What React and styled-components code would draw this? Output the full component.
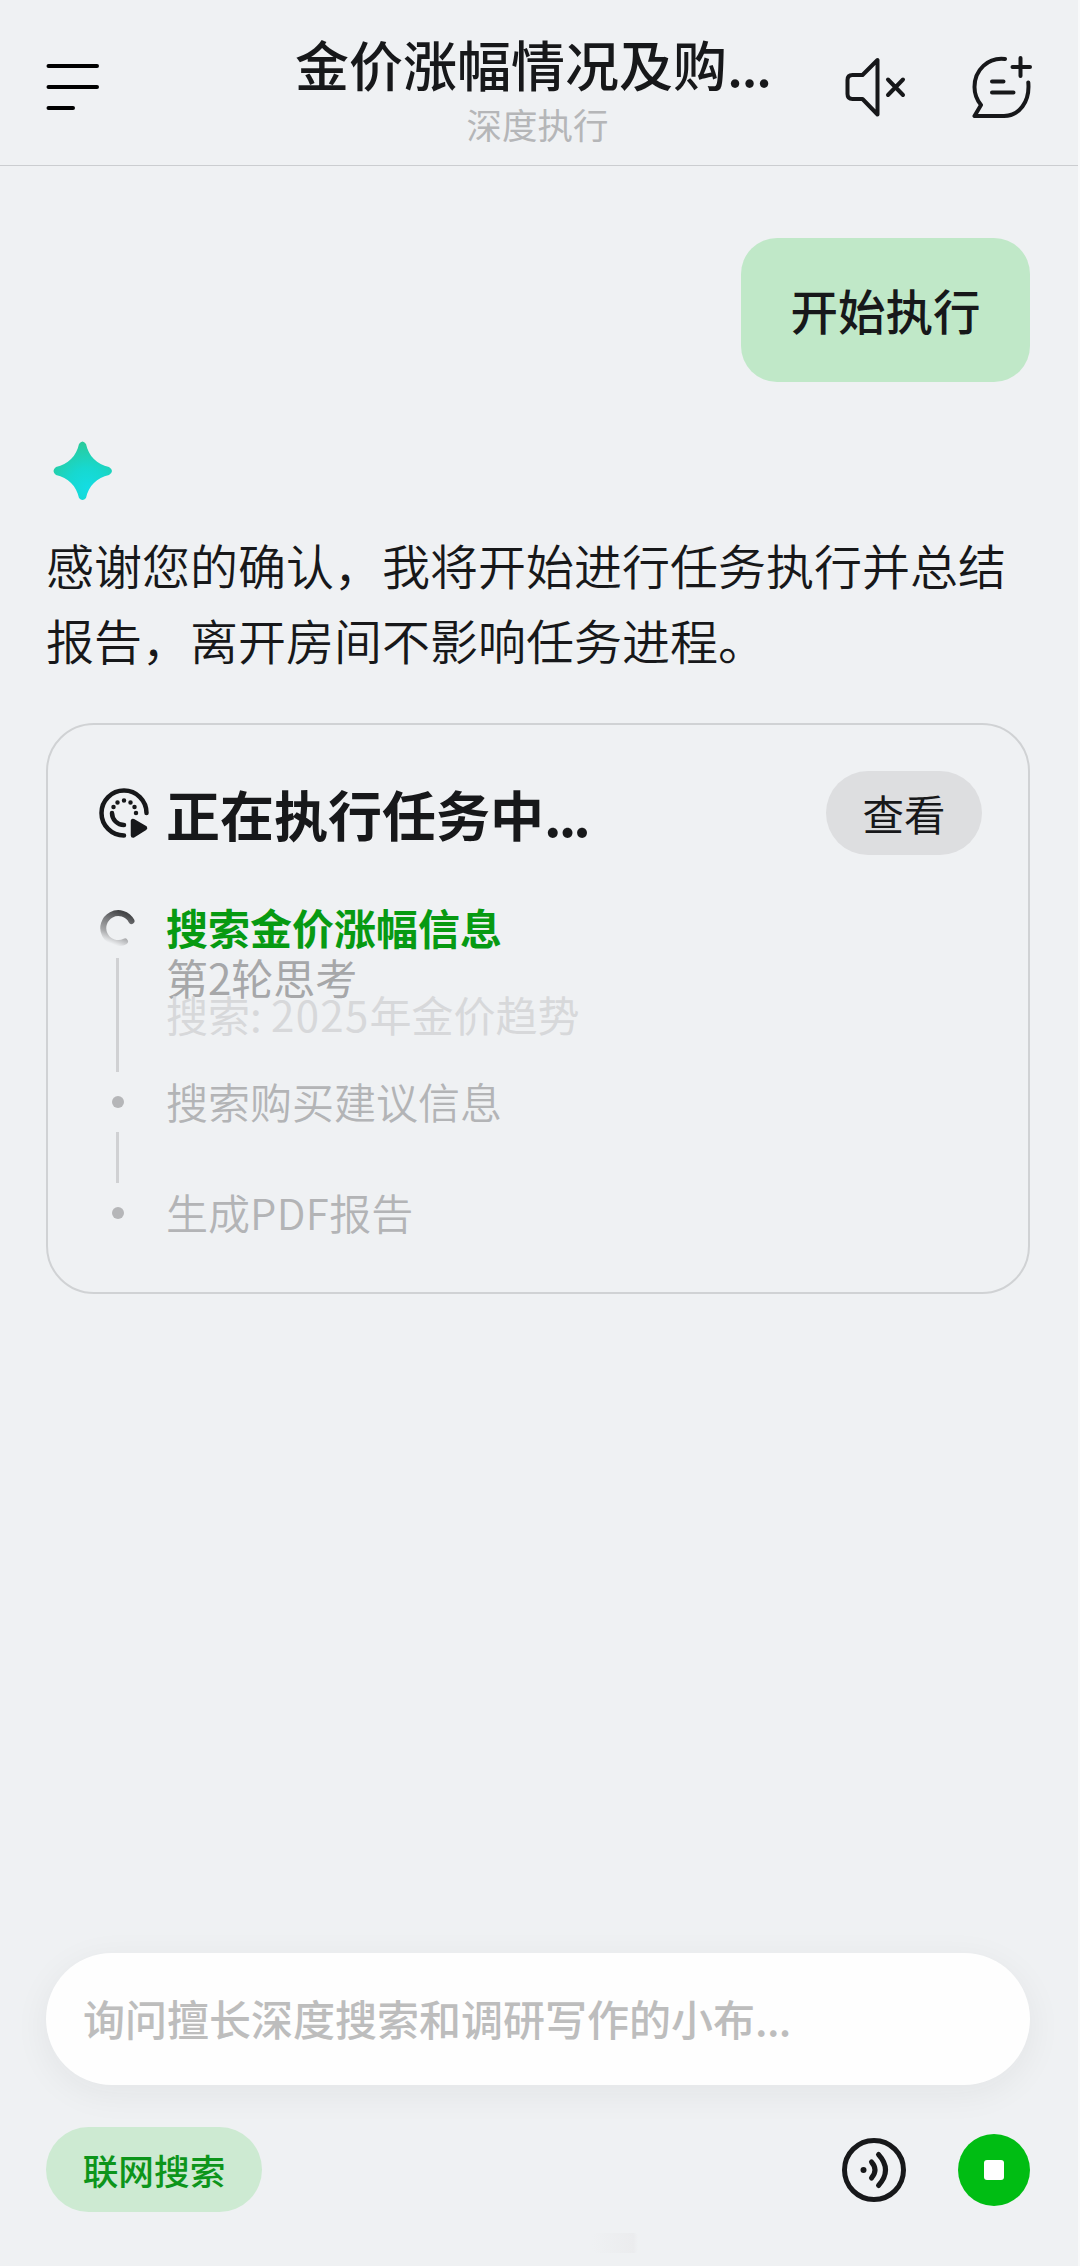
import styled, { createGlobalStyle, css } from 'styled-components';

const GlobalStyle = createGlobalStyle`
  * {
    box-sizing: border-box;
  }
  body {
    margin: 0;
    background: #eff1f3;
    color: #17181a;
    font-family: 'Noto Sans CJK SC', 'Noto Sans', sans-serif;
  }
  button {
    border: 0;
    padding: 0;
    background: none;
    color: inherit;
    font: inherit;
  }
  svg {
    display: block;
  }
`;

const Screen = styled.div`
  display: flex;
  flex-direction: column;
  width: 1080px;
  height: 2266px;
  border-right: 2px solid #f8f9fa;
  overflow: hidden;
`;

/* run of latin characters or dots inside chinese text */
const Run = styled.span`
  letter-spacing: ${(props) => props.$spacing}px;
`;

/* ---------- header ---------- */

const Header = styled.header`
  display: flex;
  align-items: flex-start;
  height: 166px;
  border-bottom: 1px solid #cbcdd0;
  padding: 0 46px;
`;

const MenuButton = styled.button`
  width: 53px;
  margin-top: 64px;
`;

const Heading = styled.div`
  width: 492px;
  margin: 28px 0 0 196px;
`;

const Title = styled.h1`
  margin: 0;
  font-size: 54px;
  font-weight: 500;
  line-height: 72px;
  white-space: nowrap;
`;

const Subtitle = styled.div`
  width: 485px;
  color: #b5b6b8;
  font-size: 35.5px;
  line-height: 48px;
  text-align: center;
`;

const Actions = styled.div`
  display: flex;
  gap: 66px;
  margin: 56px 0 0 58px;
`;

/* ---------- conversation ---------- */

const Conversation = styled.main`
  display: flex;
  flex: 1;
  flex-direction: column;
  align-items: flex-start;
  padding: 72px 48px 0 46px;
`;

const Bubble = styled.div`
  align-self: flex-end;
  width: 289px;
  height: 144px;
  padding-top: 37px;
  border-radius: 36px;
  background: #c0e8c8;
  font-size: 47.5px;
  font-weight: 500;
  line-height: 70px;
  text-align: center;
`;

const Avatar = styled.div`
  margin: 59px 0 0 7px;
`;

const Reply = styled.p`
  margin: 26px 0 0;
  font-size: 48px;
  font-weight: 350;
  line-height: 75px;
`;

const Card = styled.section`
  width: 100%;
  margin-top: 46px;
  padding: 46px 46px 52px 51px;
  border: 2px solid #d0d2d4;
  border-radius: 48px;
`;

const CardHead = styled.div`
  display: flex;
  align-items: center;
  height: 84px;
`;

const CardTitle = styled.h2`
  flex: 1;
  margin: 0 0 0 17px;
  padding-top: 2px;
  font-size: 54px;
  font-weight: 700;
  line-height: 78px;
`;

const ViewButton = styled.button`
  width: 156px;
  height: 84px;
  padding-bottom: 1px;
  border-radius: 42px;
  background: #dddee0;
  font-size: 41.5px;
  font-weight: 400;
`;

const Steps = styled.ul`
  margin: 46px 0 0;
  padding: 0;
  list-style: none;
`;

const Step = styled.li`
  display: flex;
  gap: 30px;
  height: ${(props) => props.$height}px;
`;

const Rail = styled.div`
  display: flex;
  flex-direction: column;
  align-items: center;
  width: 37px;
`;

const Marker = styled.div`
  display: flex;
  align-items: center;
  height: 54px;
`;

const Dot = styled.i`
  width: 12px;
  height: 12px;
  border-radius: 50%;
  background: #b5b6b8;
`;

const Connector = styled.i`
  flex: 1;
  width: 3px;
  margin: 3px 0;
  background: #d0d1d3;
`;

const StepBody = styled.div`
  padding-top: 1px;
`;

const StepText = styled.div`
  color: #b3b4b6;
  font-size: 42px;
  font-weight: 350;
  line-height: 50px;
  white-space: nowrap;

  ${(props) => props.$active && css`
    color: #079a12;
    font-weight: 700;
  `}
`;

const Thought = styled(StepText)`
  color: ${(props) => (props.$next ? '#d7d8da' : '#a6a7a9')};
  font-weight: 400;
  margin-top: ${(props) => (props.$next ? '-13px' : 0)};
`;

/* ---------- composer ---------- */

const Composer = styled.footer`
  display: flex;
  flex-direction: column;
  height: 313px;
  padding: 0 48px 0 46px;
`;

const Field = styled.div`
  height: 132px;
  padding: 32px 37px 0;
  border-radius: 66px;
  background: #fefefe;
  box-shadow: 0 8px 36px rgba(30, 32, 34, 0.06);
  color: #bdbdbd;
  font-size: 42px;
  font-weight: 500;
  line-height: 66px;
`;

const Tools = styled.div`
  display: flex;
  align-items: center;
  gap: 52px;
  height: 85px;
  margin-top: 42px;
`;

const Chip = styled.button`
  width: 216px;
  height: 85px;
  margin-right: auto;
  padding-bottom: 1px;
  border-radius: 43px;
  background: #cdead2;
  color: #0d951b;
  font-size: 35.7px;
  font-weight: 500;
`;

const StopButton = styled.button`
  display: flex;
  align-items: center;
  justify-content: center;
  width: 72px;
  height: 72px;
  border-radius: 50%;
  background: #00bd13;

  i {
    width: 20px;
    height: 20px;
    border-radius: 3px;
    background: #fff;
  }
`;

const HomeHint = styled.div`
  align-self: flex-end;
  width: 46px;
  height: 20px;
  margin: 21px 392px 0 0;
  border-radius: 4px;
  background: linear-gradient(90deg, #eff1f3, #ebecee 90%, #eff1f3);
`;

const MenuIcon = () => (
  <svg width='53' height='46' fill='none' stroke='#000' strokeWidth='4' strokeLinecap='round'>
    <path d='M2.500 2h48.500M2.500 23h48.500M2.500 44h24.500' />
  </svg>
);

const MutedIcon = () => (
  <svg width='62' height='62' fill='none' stroke='#17181a' strokeWidth='4' strokeLinecap='round' strokeLinejoin='round'>
    <path d='M33.500 4v54.500L18.500 43H8.500q-5 0-5-5V24q0-5 5-5h10Z' />
    <path d='M44 23.500l15 15.500M59 23.500L44 39' />
  </svg>
);

const NewChatIcon = () => (
  <svg width='60' height='62' fill='none' stroke='#17181a' strokeWidth='4' strokeLinecap='round' strokeLinejoin='round'>
    <path d='M33 3C16 1 2.500 14 2.500 31q0 10 6.500 18l-6.500 11H32c15 0 26-14 24.300-33.500' />
    <path d='M20 25.500h11.500M20 36.500h21.500M40.500 11h17.500M48.500 2v18' />
  </svg>
);

const SparkIcon = () => (
  <svg width='60' height='60' viewBox='0 0 60 60'>
    <defs>
      <radialGradient id='spark' cx='0.58' cy='0.8' r='0.78'>
        <stop offset='0' stopColor='#14dde4' />
        <stop offset='0.45' stopColor='#17d8cf' />
        <stop offset='1' stopColor='#2acb9c' />
      </radialGradient>
    </defs>
    <path
      fill='url(#spark)'
      d='M26 3q3.500-5 7 0C35.500 15 44 23.500 56 26q6 4 0 8C44 36.500 35.500 45 33 57q-3.500 4-7 0C23.500 45 15 36.500 3 34q-5-4 0-8C15 23.500 23.500 15 26 3Z'
    />
  </svg>
);

const TaskIcon = () => (
  <svg width='50' height='50' fill='none' stroke='#17181a' strokeWidth='4.500' strokeLinecap='round' strokeLinejoin='round'>
    <path d='M25 47.500A22.500 22.500 0 1 1 47.500 25' />
    <path d='M25 37A12 12 0 0 1 13 25' />
    <path d='M14.500 19h0M18.500 14.500h0M25 12.500h0M31.500 14.500h0M35.500 19h0M37 25h0' />
    <path d='M34 33v14.500L46 40Z' fill='#17181a' />
  </svg>
);

const Spinner = () => (
  <svg width='36' height='36' fill='none'>
    <defs>
      <linearGradient id='spin' gradientUnits='userSpaceOnUse' x1='32' y1='6' x2='20' y2='37'>
        <stop offset='0' stopColor='#444547' />
        <stop offset='0.35' stopColor='#7c7d7f' />
        <stop offset='0.7' stopColor='#a8a9ab' />
        <stop offset='1' stopColor='#eff1f3' />
      </linearGradient>
    </defs>
    <path d='M31.500 11A15 15 0 1 0 25 31.500' stroke='url(#spin)' strokeWidth='6' strokeLinecap='round' />
  </svg>
);

const VoiceIcon = () => (
  <svg width='64' height='64' fill='none' stroke='#17181a' strokeWidth='5' strokeLinecap='round'>
    <circle cx='32' cy='32' r='29.500' />
    <circle cx='21.500' cy='32' r='3' fill='#17181a' stroke='none' />
    <path d='M29.500 24q7 8 0 16M36.500 16.500q14 15.500 0 31' />
  </svg>
);

function App() {
  return (
    <>
      <GlobalStyle />
      <Screen>
        <Header>
          <MenuButton><MenuIcon /></MenuButton>
          <Heading>
            <Title>金价涨幅情况及购<Run $spacing={-1.6}>...</Run></Title>
            <Subtitle>深度执行</Subtitle>
          </Heading>
          <Actions>
            <button><MutedIcon /></button>
            <button><NewChatIcon /></button>
          </Actions>
        </Header>

        <Conversation>
          <Bubble>开始执行</Bubble>
          <Avatar><SparkIcon /></Avatar>
          <Reply>感谢您的确认，我将开始进行任务执行并总结报告，离开房间不影响任务进程。</Reply>
          <Card>
            <CardHead>
              <TaskIcon />
              <CardTitle>正在执行任务中<Run $spacing={-2.9}>...</Run></CardTitle>
              <ViewButton>查看</ViewButton>
            </CardHead>
            <Steps>
              <Step $height={174}>
                <Rail>
                  <Marker><Spinner /></Marker>
                  <Connector />
                </Rail>
                <StepBody>
                  <StepText $active>搜索金价涨幅信息</StepText>
                  <Thought>第2轮思考</Thought>
                  <Thought $next>搜索: <Run $spacing={1.3}>2025</Run>年金价趋势</Thought>
                </StepBody>
              </Step>
              <Step $height={111}>
                <Rail>
                  <Marker><Dot /></Marker>
                  <Connector />
                </Rail>
                <StepBody>
                  <StepText>搜索购买建议信息</StepText>
                </StepBody>
              </Step>
              <Step $height={54}>
                <Rail>
                  <Marker><Dot /></Marker>
                </Rail>
                <StepBody>
                  <StepText>生成<Run $spacing={0.4}>PDF</Run>报告</StepText>
                </StepBody>
              </Step>
            </Steps>
          </Card>
        </Conversation>

        <Composer>
          <Field>询问擅长深度搜索和调研写作的小布<Run $spacing={-0.6}>...</Run></Field>
          <Tools>
            <Chip>联网搜索</Chip>
            <button><VoiceIcon /></button>
            <StopButton><i /></StopButton>
          </Tools>
          <HomeHint />
        </Composer>
      </Screen>
    </>
  );
}

export default App;
